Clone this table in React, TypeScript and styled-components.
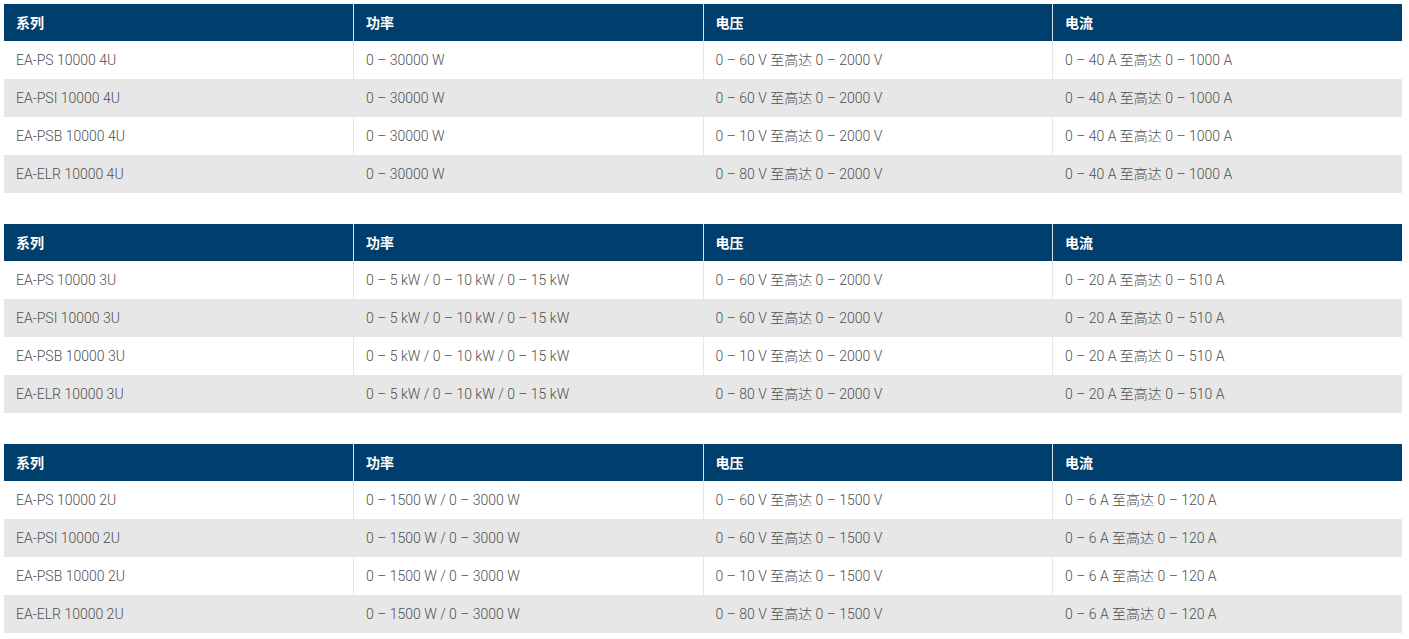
import styled, { createGlobalStyle } from "styled-components";

const GlobalStyle = createGlobalStyle`
  body {
    margin: 0;
    background: #ffffff;
    font-family: Roboto, "Noto Sans CJK SC", sans-serif;
  }
`;

const Page = styled.div`
  display: flex;
  flex-direction: column;
  gap: 31px;
  padding: 4px 7px 4px 4px;
  width: 1398px;
`;

const Table = styled.table`
  width: 1398px;
  border-collapse: collapse;
  table-layout: fixed;
`;

const HeadCell = styled.th`
  height: 37px;
  padding: 0 12px 2px;
  box-sizing: border-box;
  background: #003e6d;
  color: #ffffff;
  font-family: "Noto Sans CJK SC", sans-serif;
  font-size: 14px;
  line-height: 18px;
  font-weight: 700;
  text-align: left;
  vertical-align: middle;
  border-left: 1px solid #d9e2ea;
  &:first-child {
    border-left: none;
  }
`;

const Row = styled.tr<{ $shaded: boolean }>`
  background: ${(p) => (p.$shaded ? "#e7e7e7" : "#ffffff")};
`;

const Cell = styled.td`
  height: 38px;
  padding: 0 12px 1px;
  box-sizing: border-box;
  color: #4f4f4f;
  font-family: Roboto, "Noto Sans CJK SC", sans-serif;
  font-size: 14px;
  font-weight: 300;
  line-height: 18px;
  vertical-align: middle;
  border-left: 1px solid #e6e6e6;
  white-space: nowrap;
  &:first-child {
    border-left: none;
  }
`;

type Spec = [string, string, string, string];

const groups: Spec[][] = [
  [
    ["EA-PS 10000 4U", "0 – 30000 W", "0 – 60 V 至高达 0 – 2000 V", "0 – 40 A 至高达 0 – 1000 A"],
    ["EA-PSI 10000 4U", "0 – 30000 W", "0 – 60 V 至高达 0 – 2000 V", "0 – 40 A 至高达 0 – 1000 A"],
    ["EA-PSB 10000 4U", "0 – 30000 W", "0 – 10 V 至高达 0 – 2000 V", "0 – 40 A 至高达 0 – 1000 A"],
    ["EA-ELR 10000 4U", "0 – 30000 W", "0 – 80 V 至高达 0 – 2000 V", "0 – 40 A 至高达 0 – 1000 A"],
  ],
  [
    ["EA-PS 10000 3U", "0 – 5 kW / 0 – 10 kW / 0 – 15 kW", "0 – 60 V 至高达 0 – 2000 V", "0 – 20 A 至高达 0 – 510 A"],
    ["EA-PSI 10000 3U", "0 – 5 kW / 0 – 10 kW / 0 – 15 kW", "0 – 60 V 至高达 0 – 2000 V", "0 – 20 A 至高达 0 – 510 A"],
    ["EA-PSB 10000 3U", "0 – 5 kW / 0 – 10 kW / 0 – 15 kW", "0 – 10 V 至高达 0 – 2000 V", "0 – 20 A 至高达 0 – 510 A"],
    ["EA-ELR 10000 3U", "0 – 5 kW / 0 – 10 kW / 0 – 15 kW", "0 – 80 V 至高达 0 – 2000 V", "0 – 20 A 至高达 0 – 510 A"],
  ],
  [
    ["EA-PS 10000 2U", "0 – 1500 W / 0 – 3000 W", "0 – 60 V 至高达 0 – 1500 V", "0 – 6 A 至高达 0 – 120 A"],
    ["EA-PSI 10000 2U", "0 – 1500 W / 0 – 3000 W", "0 – 60 V 至高达 0 – 1500 V", "0 – 6 A 至高达 0 – 120 A"],
    ["EA-PSB 10000 2U", "0 – 1500 W / 0 – 3000 W", "0 – 10 V 至高达 0 – 1500 V", "0 – 6 A 至高达 0 – 120 A"],
    ["EA-ELR 10000 2U", "0 – 1500 W / 0 – 3000 W", "0 – 80 V 至高达 0 – 1500 V", "0 – 6 A 至高达 0 – 120 A"],
  ],
];

const headers = ["系列", "功率", "电压", "电流"];

const SpecTable = ({ rows }: { rows: Spec[] }) => (
  <Table>
    <thead>
      <tr>
        {headers.map((h) => (
          <HeadCell key={h}>{h}</HeadCell>
        ))}
      </tr>
    </thead>
    <tbody>
      {rows.map((r, i) => (
        <Row key={r[0]} $shaded={i % 2 === 1}>
          {r.map((c, j) => (
            <Cell key={j}>{c}</Cell>
          ))}
        </Row>
      ))}
    </tbody>
  </Table>
);

export default function App() {
  return (
    <>
      <GlobalStyle />
      <Page>
        {groups.map((g, i) => (
          <SpecTable key={i} rows={g} />
        ))}
      </Page>
    </>
  );
}
